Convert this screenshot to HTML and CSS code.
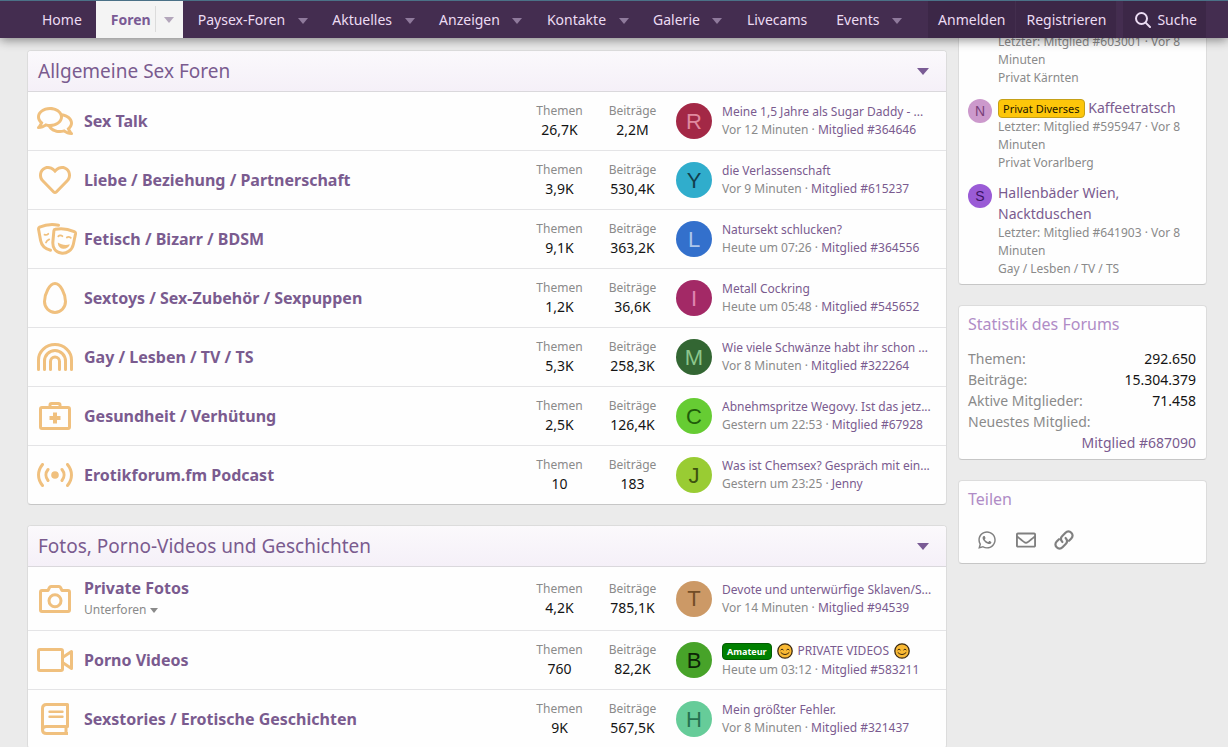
FILE: index.html
```html
<!DOCTYPE html>
<html lang="de">
<head>
<meta charset="utf-8">
<meta name="viewport" content="width=device-width, initial-scale=1">
<title>Foren</title>
<link rel="stylesheet" href="styles.css">
</head>
<body>
<header class="nav">
  <nav class="nav-list">
    <a class="nav-item" href="#">Home</a>
    <div class="nav-group is-active"><a class="nav-item" href="#">Foren</a><button class="nav-toggle" aria-label="Foren Menü"><span class="caret"></span></button></div>
    <div class="nav-group"><a class="nav-item" href="#">Paysex-Foren</a><button class="nav-toggle" aria-label="Paysex-Foren Menü"><span class="caret"></span></button></div>
    <div class="nav-group"><a class="nav-item" href="#">Aktuelles</a><button class="nav-toggle" aria-label="Aktuelles Menü"><span class="caret"></span></button></div>
    <div class="nav-group"><a class="nav-item" href="#">Anzeigen</a><button class="nav-toggle" aria-label="Anzeigen Menü"><span class="caret"></span></button></div>
    <div class="nav-group"><a class="nav-item" href="#">Kontakte</a><button class="nav-toggle" aria-label="Kontakte Menü"><span class="caret"></span></button></div>
    <div class="nav-group"><a class="nav-item" href="#">Galerie</a><button class="nav-toggle" aria-label="Galerie Menü"><span class="caret"></span></button></div>
    <a class="nav-item" href="#">Livecams</a>
    <div class="nav-group"><a class="nav-item" href="#">Events</a><button class="nav-toggle" aria-label="Events Menü"><span class="caret"></span></button></div>
  </nav>
  <div class="nav-account">
    <a class="account-link" href="#">Anmelden</a>
    <a class="account-link" href="#">Registrieren</a>
  </div>
  <a class="nav-search" href="#"><svg width="16" height="16" viewBox="0 0 16 16" fill="none" stroke="currentColor" stroke-width="2" stroke-linecap="round"><circle cx="6.5" cy="6.5" r="5.5"/><path d="M10.6 10.6 15 15"/></svg>Suche</a>
</header>

<div class="page">
  <main class="forums">
    <section class="card">
      <h2 class="card-head"><a href="#">Allgemeine Sex Foren</a><button class="collapse" aria-label="Einklappen"><span class="caret caret-big"></span></button></h2>

      <article class="node">
        <span class="node-icon"><svg width="36" height="32" viewBox="0 0 576 512" fill="currentColor"><path d="M532 386.2c27.5-27.1 44-61.1 44-98.2 0-80-76.5-146.1-176.2-157.9C368.3 72.5 294.3 32 208 32 93.1 32 0 103.6 0 192c0 37 16.5 71 44 98.2-15.3 30.7-37.3 54.5-37.7 54.9-6.3 6.7-8.1 16.5-4.4 25 3.6 8.5 12 14 21.2 14 53.5 0 96.7-20.2 125.2-38.8 9.2 2.1 18.7 3.7 28.4 4.9C208.1 407.6 281.8 448 368 448c20.8 0 40.8-2.4 59.8-6.8C456.3 459.7 499.4 480 553 480c9.2 0 17.5-5.5 21.2-14 3.6-8.5 1.9-18.3-4.4-25-.4-.3-22.5-24.1-37.8-54.8zm-392.8-92.3L122.1 305c-14.1 9.1-28.5 16.3-43.1 21.4 2.7-4.7 5.4-9.7 8-14.8l15.5-31.1L77.7 256C64.2 242.6 48 220.7 48 192c0-60.7 73.3-112 160-112s160 51.3 160 112-73.3 112-160 112c-16.5 0-33-1.9-49-5.6l-19.8-4.5zM498.3 352l-24.7 24.4 15.5 31.1c2.6 5.1 5.3 10.1 8 14.8-14.6-5.1-29-12.3-43.1-21.4l-17.1-11.1-19.9 4.6c-16 3.7-32.5 5.6-49 5.6-54 0-102.2-20.1-131.3-49.7C338 339.5 416 272.9 416 192c0-3.4-.4-6.7-.7-10C479.7 196.5 528 238.8 528 288c0 28.7-16.2 50.6-29.7 64z"/></svg></span>
        <div class="node-main"><h3 class="node-title"><a href="#">Sex Talk</a></h3></div>
        <dl class="stat"><dt>Themen</dt><dd>26,7K</dd></dl>
        <dl class="stat"><dt>Beiträge</dt><dd>2,2M</dd></dl>
        <a class="avatar av-r" href="#">R</a>
        <div class="latest"><a class="latest-title" href="#">Meine 1,5 Jahre als Sugar Daddy - ...</a><div class="latest-meta">Vor 12 Minuten · <a href="#">Mitglied #364646</a></div></div>
      </article>

      <article class="node">
        <span class="node-icon"><svg width="32" height="32" viewBox="0 0 512 512" fill="currentColor"><path d="M458.4 64.3C400.6 15.7 311.3 23 256 79.3 200.7 23 111.4 15.6 53.6 64.3-21.6 127.6-10.6 230.8 43 285.5l175.4 178.7c10 10.2 23.4 15.9 37.6 15.9 14.3 0 27.6-5.6 37.6-15.8L469 285.6c53.5-54.7 64.7-157.9-10.6-221.3zm-23.6 187.5L259.4 430.5c-2.4 2.4-4.4 2.4-6.8 0L77.2 251.8c-36.5-37.2-43.9-107.6 7.3-150.7 38.9-32.7 98.9-27.8 136.5 10.5l35 35.7 35-35.7c37.8-38.5 97.8-43.2 136.5-10.6 51.1 43.1 43.5 113.9 7.3 150.8z"/></svg></span>
        <div class="node-main"><h3 class="node-title"><a href="#">Liebe / Beziehung / Partnerschaft</a></h3></div>
        <dl class="stat"><dt>Themen</dt><dd>3,9K</dd></dl>
        <dl class="stat"><dt>Beiträge</dt><dd>530,4K</dd></dl>
        <a class="avatar av-y" href="#">Y</a>
        <div class="latest"><a class="latest-title" href="#">die Verlassenschaft</a><div class="latest-meta">Vor 9 Minuten · <a href="#">Mitglied #615237</a></div></div>
      </article>

      <article class="node">
        <span class="node-icon node-icon-wide"><svg width="40" height="32" viewBox="0 0 40 32" fill="none" stroke="currentColor" stroke-width="3" stroke-linecap="round" stroke-linejoin="round"><path d="M21.5 2.2C14.5.8 8 1.8 2.6 4.2 1.6 4.7 1.4 5.3 1.6 6.4L3.6 17.5C4.7 23 8.5 26 13.5 27.2"/><path d="M18.3 6.3C24.7 4.9 31 5.9 37.2 8.7 38.3 9.2 38.7 9.9 38.5 11L36.3 21.5C35.1 27.2 29.5 31 24 30 18.5 29 15.3 24.5 15.9 18.5L16.9 7.7C17 6.9 17.5 6.4 18.3 6.3Z"/><path d="M7.5 11.7c1.3.5 2.7.2 3.8-.9M9 19.5c.6-1.5 1.7-2.5 3.2-3.1M21.3 13.3c1-1.2 2.9-1.2 4.1-.1M29.8 14.5c1.1-1 3-.9 4 .4" stroke-width="1.8"/><path d="M20.8 19.5c3.6 2.3 7.8 3 12 1.8-.8 3.1-3.7 4.9-6.8 4.500-3-.4-5.200-2.800-5.200-6.300Z" fill="currentColor" stroke="none"/></svg></span>
        <div class="node-main"><h3 class="node-title"><a href="#">Fetisch / Bizarr / BDSM</a></h3></div>
        <dl class="stat"><dt>Themen</dt><dd>9,1K</dd></dl>
        <dl class="stat"><dt>Beiträge</dt><dd>363,2K</dd></dl>
        <a class="avatar av-l" href="#">L</a>
        <div class="latest"><a class="latest-title" href="#">Natursekt schlucken?</a><div class="latest-meta">Heute um 07:26 · <a href="#">Mitglied #364556</a></div></div>
      </article>

      <article class="node">
        <span class="node-icon"><svg width="24" height="32" viewBox="0 0 24 32" fill="none" stroke="currentColor" stroke-width="3"><path d="M12 1.5C17.5 1.5 22.5 12 22.5 19.5A10.5 11 0 0 1 1.5 19.5C1.5 12 6.5 1.5 12 1.5Z"/></svg></span>
        <div class="node-main"><h3 class="node-title"><a href="#">Sextoys / Sex-Zubehör / Sexpuppen</a></h3></div>
        <dl class="stat"><dt>Themen</dt><dd>1,2K</dd></dl>
        <dl class="stat"><dt>Beiträge</dt><dd>36,6K</dd></dl>
        <a class="avatar av-i" href="#">I</a>
        <div class="latest"><a class="latest-title" href="#">Metall Cockring</a><div class="latest-meta">Heute um 05:48 · <a href="#">Mitglied #545652</a></div></div>
      </article>

      <article class="node">
        <span class="node-icon"><svg width="36" height="28" viewBox="0 0 36 28" fill="none" stroke="currentColor" stroke-width="3" stroke-linecap="round"><path d="M1.5 26.5V17A16.5 15.5 0 0 1 34.5 17V26.5M7.5 26.5V18A10.5 10.5 0 0 1 28.5 18V26.5M13.5 26.5V18.5A4.5 4.5 0 0 1 22.5 18.5V26.5"/></svg></span>
        <div class="node-main"><h3 class="node-title"><a href="#">Gay / Lesben / TV / TS</a></h3></div>
        <dl class="stat"><dt>Themen</dt><dd>5,3K</dd></dl>
        <dl class="stat"><dt>Beiträge</dt><dd>258,3K</dd></dl>
        <a class="avatar av-m" href="#">M</a>
        <div class="latest"><a class="latest-title" href="#">Wie viele Schwänze habt ihr schon ...</a><div class="latest-meta">Vor 8 Minuten · <a href="#">Mitglied #322264</a></div></div>
      </article>

      <article class="node">
        <span class="node-icon"><svg width="32" height="28" viewBox="0 0 32 28" fill="none" stroke="currentColor" stroke-width="3" stroke-linejoin="round"><rect x="1.5" y="5.5" width="29" height="21" rx="1.5"/><path d="M11 5V3Q11 1.5 12.5 1.5H19.5Q21 1.5 21 3V5"/><path d="M16 10.5V21.5M10.5 16H21.5" stroke-width="4" stroke-linecap="butt"/></svg></span>
        <div class="node-main"><h3 class="node-title"><a href="#">Gesundheit / Verhütung</a></h3></div>
        <dl class="stat"><dt>Themen</dt><dd>2,5K</dd></dl>
        <dl class="stat"><dt>Beiträge</dt><dd>126,4K</dd></dl>
        <a class="avatar av-c" href="#">C</a>
        <div class="latest"><a class="latest-title" href="#">Abnehmspritze Wegovy. Ist das jetz...</a><div class="latest-meta">Gestern um 22:53 · <a href="#">Mitglied #67928</a></div></div>
      </article>

      <article class="node">
        <span class="node-icon"><svg width="36" height="24" viewBox="0 0 36 24" fill="none" stroke="currentColor" stroke-width="3" stroke-linecap="round"><circle cx="18" cy="12" r="3.8" fill="currentColor" stroke="none"/><path d="M5.5 1.5C.2 8 .2 16 5.5 22.5M11 6.5C8.3 9.8 8.3 14.2 11 17.5M30.5 1.5C35.8 8 35.8 16 30.5 22.5M25 6.5C27.7 9.8 27.7 14.2 25 17.5"/></svg></span>
        <div class="node-main"><h3 class="node-title"><a href="#">Erotikforum.fm Podcast</a></h3></div>
        <dl class="stat"><dt>Themen</dt><dd>10</dd></dl>
        <dl class="stat"><dt>Beiträge</dt><dd>183</dd></dl>
        <a class="avatar av-j" href="#">J</a>
        <div class="latest"><a class="latest-title" href="#">Was ist Chemsex? Gespräch mit ein...</a><div class="latest-meta">Gestern um 23:25 · <a href="#">Jenny</a></div></div>
      </article>
    </section>

    <section class="card">
      <h2 class="card-head"><a href="#">Fotos, Porno-Videos und Geschichten</a><button class="collapse" aria-label="Einklappen"><span class="caret caret-big"></span></button></h2>

      <article class="node">
        <span class="node-icon"><svg width="32" height="28" viewBox="0 0 32 28" fill="none" stroke="currentColor" stroke-width="3" stroke-linejoin="round"><path d="M3 5.5H9L10.5 2.5Q11 1.5 12 1.5H20Q21 1.5 21.5 2.5L23 5.5H29Q30.5 5.5 30.5 7V25Q30.5 26.5 29 26.5H3Q1.5 26.5 1.5 25V7Q1.5 5.5 3 5.5Z"/><circle cx="16" cy="15.8" r="6"/></svg></span>
        <div class="node-main has-subforums"><h3 class="node-title"><a href="#">Private Fotos</a></h3><button class="subforums">Unterforen <span class="caret"></span></button></div>
        <dl class="stat"><dt>Themen</dt><dd>4,2K</dd></dl>
        <dl class="stat"><dt>Beiträge</dt><dd>785,1K</dd></dl>
        <a class="avatar av-t" href="#">T</a>
        <div class="latest"><a class="latest-title" href="#">Devote und unterwürfige Sklaven/S...</a><div class="latest-meta">Vor 14 Minuten · <a href="#">Mitglied #94539</a></div></div>
      </article>

      <article class="node">
        <span class="node-icon"><svg width="36" height="24" viewBox="0 0 36 24" fill="none" stroke="currentColor" stroke-width="3" stroke-linejoin="round"><rect x="1.5" y="1.5" width="24" height="21" rx="1.5"/><path d="M25.5 9.5 34.5 3.5V20.5L25.5 14.5"/></svg></span>
        <div class="node-main"><h3 class="node-title"><a href="#">Porno Videos</a></h3></div>
        <dl class="stat"><dt>Themen</dt><dd>760</dd></dl>
        <dl class="stat"><dt>Beiträge</dt><dd>82,2K</dd></dl>
        <a class="avatar av-b" href="#">B</a>
        <div class="latest"><a class="latest-title latest-flex" href="#"><span class="label label-green">Amateur</span><svg class="emoji" width="16" height="16" viewBox="0 0 16 16" fill="none" stroke="#3d2a10" stroke-linecap="round"><circle cx="8" cy="8" r="7.2" fill="#f9b934" stroke-width="1.3"/><path d="M3.8 6.8Q5 5 6.3 6.8M9.7 6.8Q11 5 12.2 6.8M4 9.7Q8 13.7 12 9.7"/></svg><span>PRIVATE VIDEOS</span><svg class="emoji" width="16" height="16" viewBox="0 0 16 16" fill="none" stroke="#3d2a10" stroke-linecap="round"><circle cx="8" cy="8" r="7.2" fill="#f9b934" stroke-width="1.3"/><path d="M3.8 6.8Q5 5 6.3 6.8M9.7 6.8Q11 5 12.2 6.8M4 9.7Q8 13.7 12 9.7"/></svg></a><div class="latest-meta">Heute um 03:12 · <a href="#">Mitglied #583211</a></div></div>
      </article>

      <article class="node">
        <span class="node-icon"><svg width="28" height="32" viewBox="0 0 28 32" fill="none" stroke="currentColor" stroke-width="3" stroke-linejoin="round"><path d="M5.5 1.5H26.5V23.5H5.5Q1.5 23.5 1.5 27V5.5Q1.5 1.5 5.5 1.5ZM1.5 27Q1.5 30.5 5.5 30.5H27M25 24V30"/><path d="M8.5 8.7H21.5M8.5 13.7H21.5" stroke-width="2.4" stroke-linecap="round"/></svg></span>
        <div class="node-main"><h3 class="node-title"><a href="#">Sexstories / Erotische Geschichten</a></h3></div>
        <dl class="stat"><dt>Themen</dt><dd>9K</dd></dl>
        <dl class="stat"><dt>Beiträge</dt><dd>567,5K</dd></dl>
        <a class="avatar av-h" href="#">H</a>
        <div class="latest"><a class="latest-title" href="#">Mein größter Fehler.</a><div class="latest-meta">Vor 8 Minuten · <a href="#">Mitglied #321437</a></div></div>
      </article>
    </section>
  </main>

  <aside class="sidebar">
    <section class="card side-posts">
      <div class="post"><span class="avatar-gap"></span><div class="post-body"><div class="post-meta">Letzter: Mitglied #603001 · Vor 8 Minuten</div><div class="post-meta">Privat Kärnten</div></div></div>
      <div class="post"><a class="avatar avatar-small av-n" href="#">N</a><div class="post-body"><a class="post-title" href="#"><span class="label label-gold">Privat Diverses</span> Kaffeetratsch</a><div class="post-meta">Letzter: Mitglied #595947 · Vor 8 Minuten</div><div class="post-meta">Privat Vorarlberg</div></div></div>
      <div class="post"><a class="avatar avatar-small av-s" href="#">S</a><div class="post-body"><a class="post-title" href="#">Hallenbäder Wien, Nacktduschen</a><div class="post-meta">Letzter: Mitglied #641903 · Vor 8 Minuten</div><div class="post-meta">Gay / Lesben / TV / TS</div></div></div>
    </section>

    <section class="card side-card">
      <h3 class="side-title">Statistik des Forums</h3>
      <dl class="totals">
        <div><dt>Themen:</dt><dd>292.650</dd></div>
        <div><dt>Beiträge:</dt><dd>15.304.379</dd></div>
        <div><dt>Aktive Mitglieder:</dt><dd>71.458</dd></div>
        <div><dt>Neuestes Mitglied:</dt><dd><a href="#">Mitglied #687090</a></dd></div>
      </dl>
    </section>

    <section class="card side-card">
      <h3 class="side-title">Teilen</h3>
      <div class="share">
        <a href="#" aria-label="WhatsApp"><svg width="18" height="20" viewBox="0 0 448 512" fill="currentColor"><path d="M380.9 97.1C339 55.1 283.2 32 223.9 32c-122.4 0-222 99.6-222 222 0 39.1 10.2 77.3 29.6 111L0 480l117.7-30.9c32.4 17.7 68.9 27 106.1 27h.1c122.3 0 224.1-99.6 224.1-222 0-59.3-25.2-115-67.1-157zm-157 341.6c-33.2 0-65.7-8.9-94-25.7l-6.7-4-69.8 18.3L72 359.2l-4.4-7c-18.5-29.4-28.2-63.3-28.2-98.2 0-101.7 82.8-184.5 184.6-184.5 49.3 0 95.6 19.2 130.4 54.1 34.8 34.9 56.2 81.2 56.1 130.5 0 101.8-84.9 184.6-186.6 184.6zm101.2-138.2c-5.5-2.8-32.8-16.2-37.9-18-5.1-1.9-8.8-2.8-12.5 2.8-3.7 5.6-14.3 18-17.6 21.8-3.2 3.7-6.5 4.2-12 1.4-32.6-16.3-54-29.1-75.5-66-5.7-9.8 5.7-9.1 16.3-30.3 1.8-3.7.9-6.9-.5-9.7-1.4-2.8-12.5-30.1-17.1-41.2-4.5-10.8-9.1-9.3-12.5-9.5-3.2-.2-6.9-.2-10.6-.2-3.7 0-9.7 1.4-14.8 6.9-5.1 5.6-19.4 19-19.4 46.3 0 27.3 19.9 53.7 22.6 57.4 2.8 3.7 39.1 59.7 94.8 83.8 35.2 15.2 49 16.5 66.6 13.9 10.7-1.6 32.8-13.4 37.4-26.4 4.6-13 4.6-24.1 3.2-26.4-1.3-2.5-5-3.9-10.5-6.6z"/></svg></a>
        <a href="#" aria-label="E-Mail"><svg width="20" height="20" viewBox="0 0 512 512" fill="currentColor"><path d="M464 64H48C21.49 64 0 85.49 0 112v288c0 26.51 21.49 48 48 48h416c26.51 0 48-21.49 48-48V112c0-26.51-21.49-48-48-48zm0 48v40.805c-22.422 18.259-58.168 46.651-134.587 106.49-16.841 13.247-50.201 45.072-73.413 44.701-23.208.375-56.579-31.459-73.413-44.701C106.18 199.465 70.425 171.067 48 152.805V112h416zM48 400V214.398c22.914 18.251 55.409 43.862 104.938 82.646 21.857 17.205 60.134 55.186 103.062 54.955 42.717.231 80.509-37.199 103.053-54.947 49.528-38.783 82.032-64.401 104.947-82.653V400H48z"/></svg></a>
        <a href="#" aria-label="Link"><svg width="20" height="20" viewBox="0 0 20 20" fill="none" stroke="currentColor" stroke-width="2.2" stroke-linecap="round"><path d="M8.4 12C6.5 10 6.7 7.6 8.3 6L11.5 2.7C13.2 1 15.6 1 17.3 2.7 19 4.4 19 6.8 17.3 8.5L15 10.8"/><path d="M11.6 8C13.5 10 13.3 12.4 11.7 14L8.5 17.3C6.8 19 4.4 19 2.7 17.3 1 15.6 1 13.2 2.7 11.5L5 9.2"/></svg></a>
      </div>
    </section>
  </aside>
</div>
</body>
</html>
```
FILE: styles.css
```css
* { box-sizing: border-box; }

body {
  margin: 0;
  background: #ebebeb;
  color: #141414;
  font-family: "Noto Sans", "Open Sans", sans-serif;
  font-size: 14px;
  line-height: 21px;
}

a { color: #7a5b8f; text-decoration: none; }
button { border: 0; padding: 0; background: none; font: inherit; color: inherit; cursor: pointer; }
h2, h3, dl, dd { margin: 0; }

.caret {
  display: inline-block;
  border: 5px solid transparent;
  border-top: 6px solid currentColor;
  border-bottom: 0;
}
.caret-big { border-width: 7px 6px 0; }

.nav {
  position: sticky;
  top: 0;
  z-index: 10;
  display: flex;
  height: 38px;
  padding: 0 22px 0 27px;
  background: #442d50;
  border-top: 1px solid #4b7187;
  box-shadow: 0 2px 10px rgba(0, 0, 0, 0.45);
}
.nav-list { display: flex; flex: 1; }
.nav-group { display: flex; }
.nav-item, .account-link, .nav-search {
  display: flex;
  align-items: center;
  color: #ecdcf3;
}
.nav-item { padding: 0 0 0 15px; }
.nav-list > .nav-item { padding-right: 14px; }
.nav-toggle { width: 32px; padding-left: 3px; color: #8f7a9c; line-height: 1; }
.nav-toggle .caret { vertical-align: middle; }
.is-active { background: #f4f4f4; font-weight: 700; }
.is-active .nav-item { color: #7a5b95; }
.is-active .nav-toggle {
  height: 26px;
  margin: 5px 0 0 4px;
  width: 28px;
  padding: 0;
  border-left: 1px solid #dcdcdc;
  color: #b3a6bb;
}
.nav-account { display: flex; margin-right: 6px; background: #3c2747; }
.account-link { padding: 0 10px; border-right: 1px solid #432e4e; }
.nav-search { gap: 6px; padding: 0 9px 0 12px; background: #3c2747; }

.page {
  display: flex;
  align-items: flex-start;
  gap: 11px;
  padding: 12px 21px 0 27px;
}
.forums { flex: 1; min-width: 0; display: grid; gap: 20px; }
.sidebar { flex: 0 0 249px; margin-top: -30px; display: grid; gap: 20px; }

.card {
  background: #fefefe;
  border: 1px solid #dcdcdc;
  border-bottom-color: #c6c6c6;
  border-radius: 4px;
}
.card-head {
  display: flex;
  align-items: center;
  justify-content: space-between;
  height: 41px;
  padding: 0 17px 0 10px;
  border-bottom: 1px solid #dad8dc;
  border-radius: 3px 3px 0 0;
  background: linear-gradient(#fbf9fc, #f5f0f8);
  font-size: 19px;
  font-weight: 400;
  color: #7a5b95;
}
.collapse { display: flex; }

.node {
  display: flex;
  align-items: center;
  min-height: 58px;
  padding: 8px 10px 8px 9px;
}
.node + .node { min-height: 59px; border-top: 1px solid #e4e4e6; }
.node-icon {
  flex: none;
  display: flex;
  justify-content: center;
  width: 36px;
  margin-right: 11px;
  color: #f0c07e;
}
.node-icon-wide { width: 40px; margin-right: 7px; }
.node-main { flex: 1; min-width: 0; }
.has-subforums { padding: 2px 0; }
.node-title { font-size: 16px; font-weight: 700; line-height: 23px; }
.subforums { display: block; color: #8a8a8a; font-size: 12px; line-height: 20px; }
.subforums .caret { border-width: 5px 4px 0; vertical-align: 1px; }

.stat { width: 73px; text-align: center; }
.stat dt { color: #8a8a8a; font-size: 12px; line-height: 18px; }
.stat dd { line-height: 20px; }

.avatar {
  flex: none;
  display: flex;
  align-items: center;
  justify-content: center;
  width: 36px;
  height: 36px;
  margin-left: 7px;
  border-radius: 50%;
  font-family: "Liberation Sans", Arial, sans-serif;
  font-size: 22px;
}
.avatar-small { width: 24px; height: 24px; margin: 2px 0 0; font-size: 14px; }
.av-r { background: #a32846; color: #e08a9f; }
.av-y { background: #30adcc; color: #123f4c; }
.av-l { background: #3370cc; color: #adc6eb; }
.av-i { background: #a32966; color: #e085b3; }
.av-m { background: #336633; color: #8cc68c; }
.av-c { background: #66cc33; color: #1f5c0a; }
.av-j { background: #99cc33; color: #3d520f; }
.av-t { background: #cc9966; color: #734d26; }
.av-b { background: #47a329; color: #0c2406; }
.av-h { background: #66cc99; color: #267350; }
.av-n { background: #cc99cc; color: #7a3f7a; }
.av-s { background: #9a5bd6; color: #3d1466; }

.latest { width: 224px; padding-left: 10px; font-size: 12px; line-height: 18px; }
.latest-title { display: block; overflow: hidden; white-space: nowrap; text-overflow: ellipsis; }
.latest-flex { display: flex; align-items: center; gap: 5px; line-height: 20px; }
.latest-meta { color: #8a8a8a; }

.label { display: inline-block; border: 1px solid; border-radius: 4px; padding: 0 4px; }
.label-green { background: #008000; border-color: #035c03; color: #fff; font-size: 9px; font-weight: 700; line-height: 15px; }
.label-gold { background: #fdc60a; border-color: #c5a017; color: #1c1600; font-size: 11px; line-height: 17px; }

.side-posts { display: grid; gap: 10px; padding: 12px 10px 6px 9px; }
.post { display: flex; gap: 6px; }
.avatar-gap { flex: none; width: 24px; }
.post-title { display: block; }
.post-meta { color: #8a8a8a; font-size: 12px; line-height: 18px; }

.side-card { padding: 6px 10px 6px 9px; }
.side-title { padding-bottom: 12px; color: #b08cc6; font-size: 16px; font-weight: 400; line-height: 24px; }
.totals > div { display: flex; flex-wrap: wrap; justify-content: space-between; }
.totals dt { color: #8a8a8a; }
.totals dd { margin-left: auto; }
.share { display: flex; align-items: center; gap: 18px; height: 34px; padding-left: 10px; color: #808080; }
.share a { display: flex; width: 20px; color: inherit; }
```
